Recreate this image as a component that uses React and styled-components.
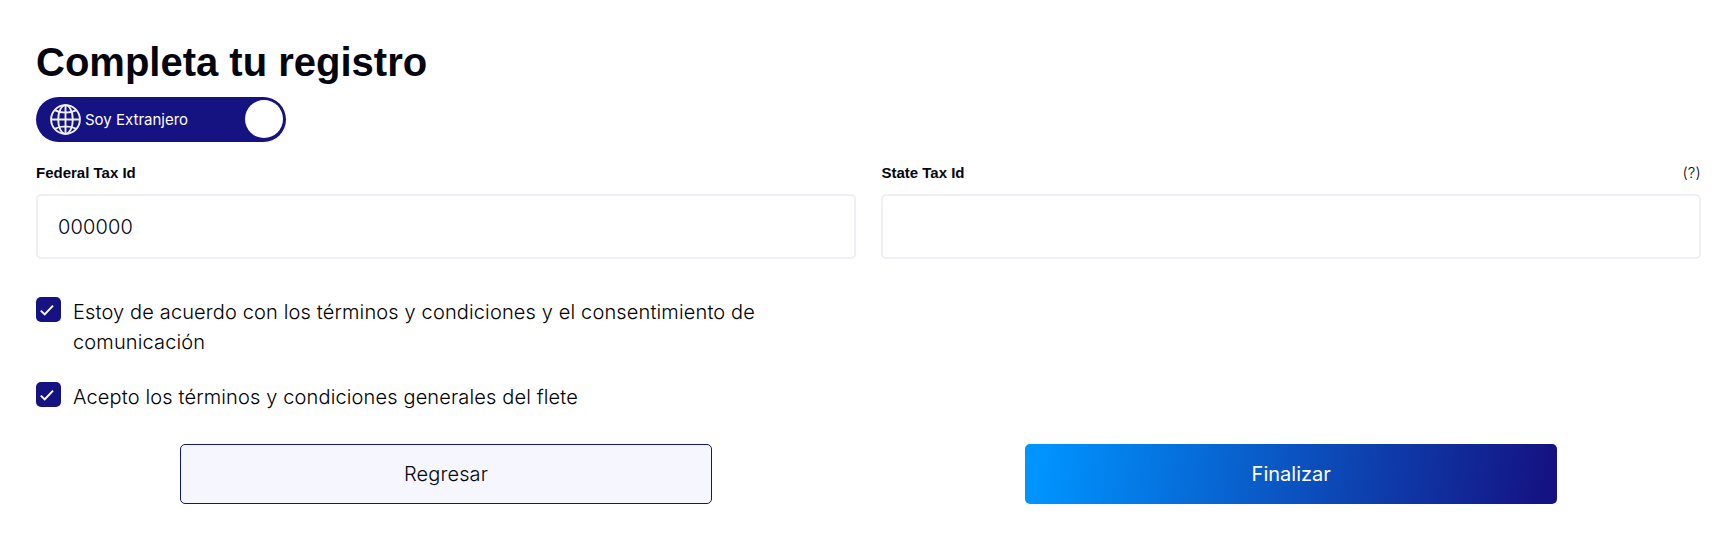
import { useState } from "react";
import styled, { createGlobalStyle, ThemeProvider } from "styled-components";

const theme = {
  colors: {
    primary: "#151282",
    text: "#04050f",
    border: "#f0eff5",
    light: "#f6f6ff",
  },
  fonts: {
    title: '"Liberation Sans", Arial, sans-serif',
    body: 'Inter, "Liberation Sans", sans-serif',
  },
};

const GlobalStyle = createGlobalStyle`
  * {
    box-sizing: border-box;
  }

  body {
    margin: 0;
    background: #fff;
    color: ${(props) => props.theme.colors.text};
    font-family: ${(props) => props.theme.fonts.body};
  }
`;

const Form = styled.form`
  padding: 39px 33px 37px 36px;
`;

const Title = styled.h1`
  margin: 0 0 12px;
  font-family: ${(props) => props.theme.fonts.title};
  font-size: 40px;
  font-weight: 700;
  line-height: 46px;
`;

const Toggle = styled.button`
  display: flex;
  align-items: center;
  width: 250px;
  height: 45px;
  padding: 0 3px 0 14px;
  border: none;
  border-radius: 23px;
  background: ${(props) => props.theme.colors.primary};
  color: #fff;
`;

const ToggleText = styled.span`
  flex: 1;
  margin-left: 4px;
  font-family: ${(props) => props.theme.fonts.body};
  font-size: 15px;
  text-align: left;
`;

const ToggleKnob = styled.span`
  width: 38px;
  height: 38px;
  margin-bottom: 1px;
  border-radius: 50%;
  background: #fff;
`;

const Columns = styled.div`
  display: grid;
  grid-template-columns: 820px 819.6px;
  justify-content: space-between;
`;

const Fields = styled(Columns)`
  margin-top: 22px;
`;

const FieldHeader = styled.div`
  display: flex;
  justify-content: space-between;
  height: 30px;
  line-height: 18px;
`;

const Label = styled.label`
  font-family: ${(props) => props.theme.fonts.title};
  font-size: 15px;
  font-weight: 700;
`;

const Help = styled.span`
  font-size: 15px;
  font-weight: 300;
  letter-spacing: 0.2px;
`;

const Input = styled.input`
  display: block;
  width: 100%;
  height: 65px;
  padding: 0 20px;
  border: 2px solid ${(props) => props.theme.colors.border};
  border-radius: 5px;
  outline: none;
  color: ${(props) => props.theme.colors.text};
  font-family: ${(props) => props.theme.fonts.body};
  font-size: 20px;
  font-weight: 300;
  letter-spacing: 0.14px;
`;

const Terms = styled.div`
  display: flex;
  flex-direction: column;
  gap: 25px;
  width: 750px;
  margin-top: 38px;
`;

const Term = styled.label`
  display: flex;
  gap: 12px;
  color: #000;
  font-size: 20px;
  font-weight: 300;
  line-height: 30px;
  letter-spacing: 0.14px;
`;

const Check = styled.span`
  flex: none;
  display: flex;
  width: 25px;
  height: 25px;
  border-radius: 5px;
  background: ${(props) => props.theme.colors.primary};
`;

const Actions = styled(Columns)`
  justify-items: center;
  margin-top: 32px;
`;

const Button = styled.button`
  width: 532px;
  height: 60px;
  border: ${(props) =>
    props.$primary ? "none" : `1px solid ${props.theme.colors.primary}`};
  border-radius: 5px;
  background: ${(props) =>
    props.$primary
      ? `linear-gradient(98deg, #0094ff 3%, ${props.theme.colors.primary} 98%)`
      : props.theme.colors.light};
  color: ${(props) => (props.$primary ? "#fff" : props.theme.colors.text)};
  font-family: ${(props) => props.theme.fonts.body};
  font-size: 20px;
  font-weight: ${(props) => (props.$primary ? 400 : 300)};
  letter-spacing: ${(props) => (props.$primary ? "normal" : "0.14px")};
`;

function Globe() {
  return (
    <svg width="31" height="31" viewBox="0 0 31 31" fill="none" stroke="#f0eff5" strokeWidth="1.9">
      <circle cx="15.5" cy="15.5" r="14.4" />
      <ellipse cx="15.5" cy="15.5" rx="7.3" ry="14.4" />
      <path d="M15.5 1v29M1 15.5h29M4.6 6.2c6 3.2 15.8 3.2 21.8 0M4.6 24.8c6-3.2 15.8-3.2 21.8 0" />
    </svg>
  );
}

function CheckMark() {
  return (
    <svg width="25" height="25" viewBox="0 0 25 25" fill="none" stroke="#fff" strokeWidth="2">
      <path d="M4.8 13.6L8.7 17.4L17 8.6" />
    </svg>
  );
}

function App() {
  const [federalId, setFederalId] = useState("000000");
  const [stateId, setStateId] = useState("");

  return (
    <ThemeProvider theme={theme}>
      <GlobalStyle />
      <Form onSubmit={(event) => event.preventDefault()}>
        <Title>{"Completa tu registro"}</Title>
        <Toggle type="button">
          <Globe />
          <ToggleText>{"Soy Extranjero"}</ToggleText>
          <ToggleKnob />
        </Toggle>
        <Fields>
          <div>
            <FieldHeader>
              <Label htmlFor="federalId">{"Federal Tax Id"}</Label>
            </FieldHeader>
            <Input
              id="federalId"
              value={federalId}
              onChange={(event) => setFederalId(event.target.value)}
            />
          </div>
          <div>
            <FieldHeader>
              <Label htmlFor="stateId">{"State Tax Id"}</Label>
              <Help>{"(?)"}</Help>
            </FieldHeader>
            <Input
              id="stateId"
              value={stateId}
              onChange={(event) => setStateId(event.target.value)}
            />
          </div>
        </Fields>
        <Terms>
          <Term>
            <Check>
              <CheckMark />
            </Check>
            {
              "Estoy de acuerdo con los términos y condiciones y el consentimiento de comunicación"
            }
          </Term>
          <Term>
            <Check>
              <CheckMark />
            </Check>
            {"Acepto los términos y condiciones generales del flete"}
          </Term>
        </Terms>
        <Actions>
          <Button type="button">{"Regresar"}</Button>
          <Button type="submit" $primary>
            {"Finalizar"}
          </Button>
        </Actions>
      </Form>
    </ThemeProvider>
  );
}

export default App;
